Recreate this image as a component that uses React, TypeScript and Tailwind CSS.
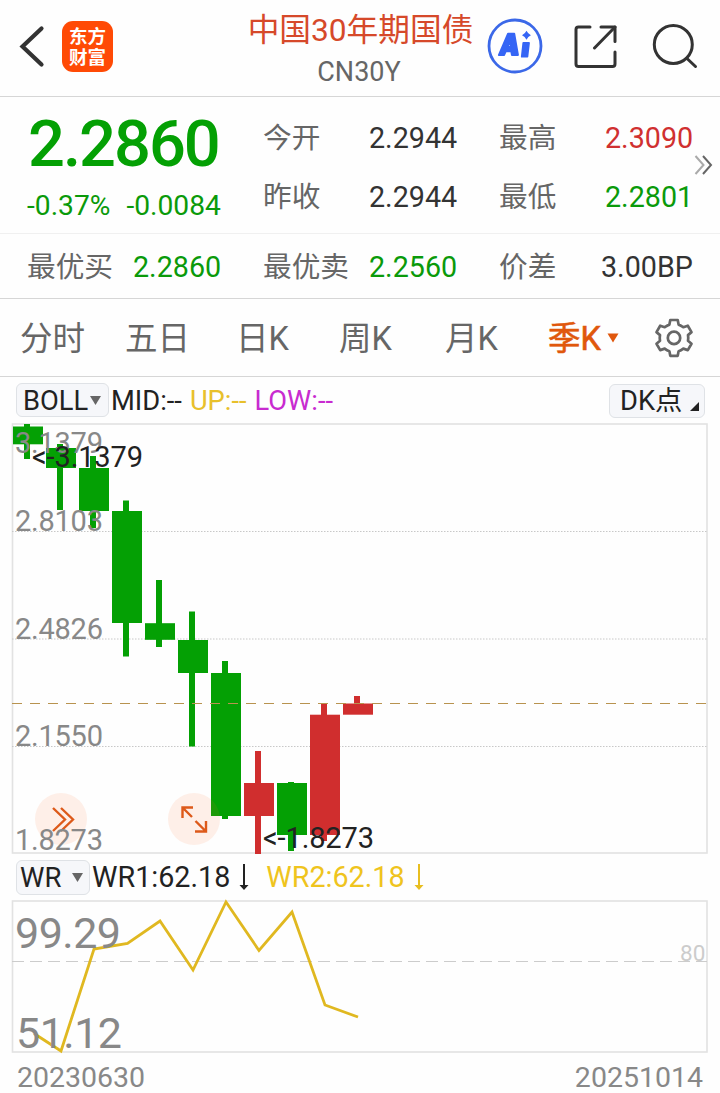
import { Fragment } from 'react';

interface Candle {
  x: number;
  open: number;
  close: number;
  high: number;
  low: number;
  up?: boolean;
}

// Pixel rows inside the price pane (top of the pane is 0)
const candles: Candle[] = [
  { x: 1, open: 3.5, close: 21.3, high: 1, low: 36 },
  { x: 34, open: 25, close: 45, high: 21, low: 87 },
  { x: 67, open: 45, close: 88, high: 33, low: 105 },
  { x: 100, open: 88, close: 200, high: 77.5, low: 233.5 },
  { x: 133, open: 200.2, close: 216.8, high: 157, low: 224 },
  { x: 166, open: 217, close: 250, high: 188.5, low: 323.5 },
  { x: 199, open: 250, close: 393, high: 238, low: 396 },
  { x: 232, open: 360, close: 393, high: 328, low: 431, up: true },
  { x: 265, open: 360, close: 412, high: 359, low: 428 },
  { x: 298, open: 291.7, close: 412, high: 280, low: 418, up: true },
  { x: 331, open: 280.5, close: 291.7, high: 273, low: 281, up: true },
];

const priceLabels = [
  { y: 30, text: '3.1379' },
  { y: 108, text: '2.8103' },
  { y: 216, text: '2.4826' },
  { y: 323, text: '2.1550' },
  { y: 427, text: '1.8273' },
];

const quotes = [
  { label: '今开', value: '2.2944', color: 'text-[#333]' },
  { label: '最高', value: '2.3090', color: 'text-[#d03030]' },
  { label: '昨收', value: '2.2944', color: 'text-[#333]' },
  { label: '最低', value: '2.2801', color: 'text-[#0a9a0a]' },
];

const tabs = ['分时', '五日', '日K', '周K', '月K'];

const BackIcon = () => (
  <svg className="h-11 w-7" viewBox="0 0 28 44" fill="none" stroke="#333" strokeWidth="4.2" strokeLinecap="round">
    <path d="M24.500 4.500L5.500 22.500L24.500 40.500" strokeLinejoin="miter" />
  </svg>
);

const AiIcon = () => (
  <svg className="h-14 w-14" viewBox="0 0 56 56">
    <circle cx="28" cy="28" r="26" fill="none" stroke="#3b68e8" strokeWidth="2.8" />
    {/* slanted A with a small counter */}
    <path
      fill="#3565f5"
      stroke="#3565f5"
      strokeWidth="1.8"
      strokeLinejoin="round"
      fillRule="evenodd"
      d="M21 15.600H27.300L31 37H24.900L24.200 33.400H18.800L17.200 37H11.800ZM23.200 23L20.800 28.800H23.900Z"
    />
    <path fill="#3565f5" stroke="#3565f5" strokeWidth="1.8" strokeLinejoin="round" d="M36.3 25H42L40.4 38.7H34.8Z" />
    <path fill="#3565f5" d="M39.500 12.700Q41 15.800 43.900 17.200Q41 18.600 39.500 21.700Q38 18.600 35 17.200Q38 15.800 39.500 12.700Z" />
  </svg>
);

const ShareIcon = () => (
  <svg className="h-11 w-11" viewBox="0 0 44 44" fill="none" stroke="#333" strokeWidth="3" strokeLinecap="round" strokeLinejoin="round">
    <path d="M16 2H4.5Q2 2 2 4.500V39Q2 41.500 4.500 41.500H38.500Q41 41.500 41 39V27" />
    <path d="M27 2H41V16.500" />
    <path d="M41 2L20.500 23" />
  </svg>
);

const SearchIcon = () => (
  <svg className="h-[46px] w-[46px]" viewBox="0 0 46 46" fill="none" stroke="#333" strokeWidth="3" strokeLinecap="round">
    <circle cx="21.300" cy="21.500" r="19" />
    <path d="M35 35.500L43.500 43.500" />
  </svg>
);

const GearIcon = () => (
  <svg className="h-10 w-10" viewBox="0 0 40 40" fill="none" stroke="#666" strokeWidth="2.7" strokeLinejoin="round">
    <path d="M16.300 2H23.700L24.600 6.600Q27 7.400 29.300 9.200L33.800 7.700L37.500 14.100L34 17.100Q34.500 20 34 22.700L37.500 25.700L33.800 32.100L29.300 30.600Q27 32.400 24.600 33.200L23.700 37.800H16.300L15.400 33.200Q13 32.400 10.700 30.600L6.200 32.100L2.500 25.700L6 22.700Q5.500 20 6 17.100L2.500 14.100L6.200 7.700L10.700 9.200Q13 7.400 15.400 6.600Z" />
    <circle cx="20" cy="19.900" r="6.200" />
  </svg>
);

const DownArrow = ({ color }: { color: string }) => (
  <svg className="h-7 w-[10px]" viewBox="0 0 10 28" fill={color}>
    <path d="M4 1H6V22H9.500L5 27L0.500 22H4Z" />
  </svg>
);

function Header() {
  return (
    <header className="flex h-[97px] items-start border-b border-[#d6d6d6]">
      <div className="flex w-[247px] items-start pt-[21px] pl-[17px]">
        <div className="pt-[3px]">
          <BackIcon />
        </div>
        <div className="ml-[17px] flex h-[51px] w-[51px] flex-col items-center justify-center rounded-[11px] bg-[#ff4a05] pt-[2px] text-[18.500px] leading-[21px] font-bold text-white">
          <span>东方</span>
          <span>财富</span>
        </div>
      </div>
      <div className="flex w-[227px] flex-col items-center whitespace-nowrap">
        <h1 className="mt-[9px] text-[31.700px] leading-[44px] text-[#d6492a]">中国30年期国债</h1>
        <p className="mt-[1px] -ml-[3px] text-[27px] leading-[36px] text-[#666]">CN30Y</p>
      </div>
      <div className="flex pl-[13px]">
        <div className="pt-[18px]">
          <AiIcon />
        </div>
        <div className="ml-[31px] pt-[25px]">
          <ShareIcon />
        </div>
        <div className="ml-[34px] pt-[23px]">
          <SearchIcon />
        </div>
      </div>
    </header>
  );
}

function Quote() {
  return (
    <section className="relative border-b border-[#d6d6d6] text-[28.700px] text-[#666]">
      <div className="flex h-[137px] border-b border-[#f0f0f0] pl-[27px]">
        <div className="w-[236px] text-[#0a9a0a]">
          <div className="mt-[9px] ml-px text-[65px] leading-[76px] font-medium tracking-[-2px] text-[#04a004]">2.2860</div>
          <div className="mt-[7px] flex gap-[16px] text-[28.200px] leading-[34px]">
            <span>-0.37%</span>
            <span>-0.0084</span>
          </div>
        </div>
        <div className="grid h-[118px] w-[429px] grid-cols-[106px_130px_106px_87px] pt-[12px] leading-[59px]">
          {quotes.map((q) => (
            <Fragment key={q.label}>
              <span>{q.label}</span>
              <span className={q.color}>{q.value}</span>
            </Fragment>
          ))}
        </div>
      </div>
      <div className="grid h-[64px] grid-cols-[106px_130px_106px_130px_102px_100px] pl-[27px] leading-[67px] whitespace-nowrap">
        <span>最优买</span>
        <span className="text-[#0a9a0a]">2.2860</span>
        <span>最优卖</span>
        <span className="text-[#0a9a0a]">2.2560</span>
        <span>价差</span>
        <span className="text-[#333]">3.00BP</span>
      </div>
      <svg className="absolute top-[57px] right-[7px] h-[22px] w-[19px]" viewBox="0 0 19 22" fill="none" strokeWidth="2">
        <path d="M1.500 2L9.500 11L1.500 20" stroke="#aaa" />
        <path d="M9 2L17 11L9 20" stroke="#666" />
      </svg>
    </section>
  );
}

function Tabs() {
  return (
    <nav className="flex h-[78px] items-center border-b border-[#d6d6d6] pl-[20px] text-[32.500px] text-[#666]">
      <div className="grid w-[528px] grid-cols-[105px_111px_103px_106px_103px] pt-[3px] whitespace-nowrap">
        {tabs.map((tab) => (
          <span key={tab}>{tab}</span>
        ))}
      </div>
      <span className="pt-[3px] text-[#e0570c] [-webkit-text-stroke:0.6px_#e0570c]">季K</span>
      <svg className="ml-[6px] h-[10px] w-[12px]" viewBox="0 0 12 10" fill="#e0570c">
        <path d="M0.500 0.500H11.500L6 9.500Z" />
      </svg>
      <div className="ml-[35px]">
        <GearIcon />
      </div>
    </nav>
  );
}

function PriceChart() {
  return (
    <svg className="ml-[12px] block h-[431px] w-[696px] overflow-visible" viewBox="0 0 696 431">
      <rect x="0.500" y="1" width="694.500" height="429" fill="none" stroke="#e2e2e2" strokeWidth="1.600" />
      {[108.5, 216, 323.500].map((y) => (
        <line key={y} x1="0" x2="695" y1={y} y2={y} stroke="#c8c8c8" strokeDasharray="1.500 1.500" />
      ))}
      {candles.map((c) => (
        <g key={c.x} fill={c.up ? '#d02e2e' : '#04a004'}>
          <rect x={c.x} y={c.open} width="30" height={c.close - c.open} />
          <rect x={c.x + 11} y={c.high} width="6" height={c.low - c.high} />
        </g>
      ))}
      <line x1="0" x2="695" y1="280.500" y2="280.500" stroke="#b8934f" strokeWidth="1.200" strokeDasharray="10 8" />
      <circle cx="49" cy="396" r="26" fill="#ff6a2a" fillOpacity="0.100" />
      <circle cx="182" cy="396" r="26" fill="#ff6a2a" fillOpacity="0.100" />
      <g fill="none" stroke="#dd5a1a" strokeWidth="2.400">
        <path d="M41 385L53 396.500L41 408" />
        <path d="M49 385L61 396.500L49 408" />
        <path d="M181 384.500H170.500V395M170.500 384.500L180 394M183.500 398L193.500 408M194 398V408.500H183" />
      </g>
      <g fontSize="29" fill="#888">
        {priceLabels.map((l) => (
          <text key={l.text} x="3" y={l.y} textLength="88">
            {l.text}
          </text>
        ))}
      </g>
      <g fontSize="29" fill="#222">
        <text x="20" y="43.500" textLength="111">{'<-3.1379'}</text>
        <text x="251" y="424.500" textLength="111">{'<-1.8273'}</text>
      </g>
    </svg>
  );
}

function WrChart() {
  return (
    <svg className="ml-[12px] block h-[153px] w-[696px] overflow-visible" viewBox="0 0 696 153">
      <rect x="0.500" y="1" width="694.500" height="151" fill="none" stroke="#e2e2e2" strokeWidth="1.600" />
      <line x1="0" x2="695" y1="61.500" y2="61.500" stroke="#ccc" strokeDasharray="12 6" />
      <polyline
        points="22,133.500 49,151 82,49 115.500,43.500 148,21 181,70 214,2 247,50.500 280,12 313,105 346,117"
        fill="none"
        stroke="#e0b820"
        strokeWidth="2.800"
      />
      <text x="668" y="61" fontSize="22.500" fill="#ccc">80</text>
      <g fontSize="43" fill="#888">
        <text x="3" y="48" textLength="106">99.29</text>
        <text x="4" y="148" textLength="106">51.12</text>
      </g>
    </svg>
  );
}

export default function App() {
  return (
    <main className="h-[1093px] w-[720px] overflow-hidden bg-[#fefefe] font-['Roboto','Noto_Sans_CJK_SC',sans-serif]">
      <Header />
      <Quote />
      <Tabs />
      <div className="flex h-[46px] items-center pl-[16px] text-[27.300px] whitespace-nowrap text-[#222]">
        <div className="flex h-[34px] w-[93px] items-center rounded-md border border-[#dfe2e6] bg-[#f6f7fa] pl-[6px]">
          <span className="pt-[2px]">BOLL</span>
          <svg className="ml-[2px] h-[9px] w-[11px] shrink-0" viewBox="0 0 11 9" fill="#666">
            <path d="M0 0H11L5.500 9Z" />
          </svg>
        </div>
        <span className="ml-[2px] pt-[2px]">MID:--</span>
        <span className="ml-[8px] pt-[2px] text-[#e8c02c]">UP:--</span>
        <span className="ml-[8px] pt-[2px] text-[#c82bd0]">LOW:--</span>
        <div className="mt-[2px] mr-[15px] ml-auto flex h-[34px] w-[96px] items-center rounded-md border border-[#dfe2e6] bg-[#f6f7fa] pl-[10px]">
          <span className="pt-px">DK点</span>
          <svg className="mt-[11px] ml-[8px] h-[9px] w-[9px] shrink-0" viewBox="0 0 9 9" fill="#222">
            <path d="M9 0V9H0Z" />
          </svg>
        </div>
      </div>
      <PriceChart />
      <div className="flex h-[46px] items-center pl-[16px] text-[28.700px] whitespace-nowrap text-[#222]">
        <div className="flex h-[35px] w-[74px] items-center rounded-md border border-[#dfe2e6] bg-[#f6f7fa] pl-[3px] text-[27.500px]">
          <span className="pt-[2px]">WR</span>
          <svg className="ml-[11px] h-[9px] w-[11px] shrink-0" viewBox="0 0 11 9" fill="#666">
            <path d="M0 0H11L5.500 9Z" />
          </svg>
        </div>
        <span className="mr-[9px] ml-[2px] pt-[2px]">WR1:62.18</span>
        <DownArrow color="#222" />
        <span className="mr-[9px] ml-[17px] pt-[2px] text-[#efc41e]">WR2:62.18</span>
        <DownArrow color="#e8be20" />
      </div>
      <WrChart />
      <div className="flex justify-between pt-[5px] pr-[17px] pl-[17px] text-[28.500px] leading-[40px] text-[#888]">
        <span>20230630</span>
        <span>20251014</span>
      </div>
    </main>
  );
}
